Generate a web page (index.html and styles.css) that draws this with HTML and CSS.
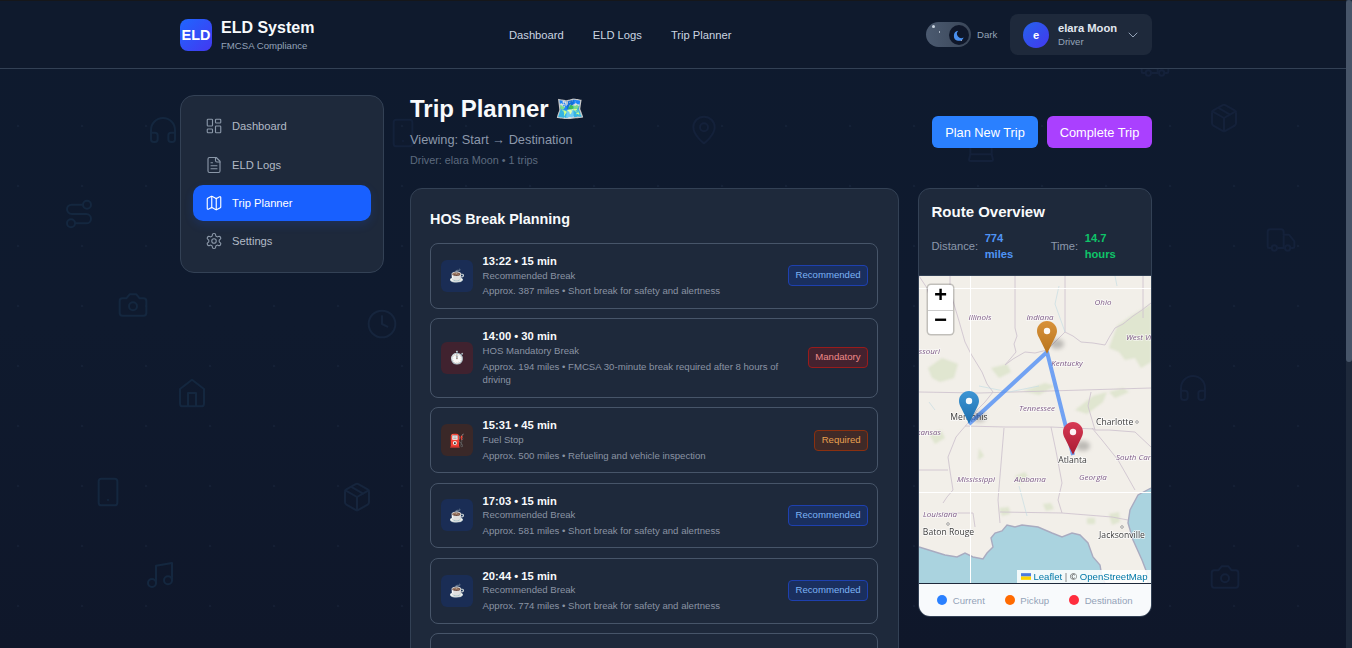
FILE: index.html
```html
<!DOCTYPE html>
<html lang="en">
<head>
<meta charset="utf-8">
<title>Trip Planner</title>
<link rel="stylesheet" href="styles.css">
</head>
<body>
<svg class="defs" width="0" height="0" aria-hidden="true">
  <defs>
    <symbol id="i-headphones" viewBox="0 0 24 24"><path d="M3 14h3a2 2 0 0 1 2 2v3a2 2 0 0 1-2 2H5a2 2 0 0 1-2-2v-7a9 9 0 0 1 18 0v7a2 2 0 0 1-2 2h-1a2 2 0 0 1-2-2v-3a2 2 0 0 1 2-2h3"/></symbol>
    <symbol id="i-route" viewBox="0 0 24 24"><circle cx="6" cy="19" r="3"/><path d="M9 19h8.5a3.5 3.5 0 0 0 0-7h-11a3.5 3.5 0 0 1 0-7H15"/><circle cx="18" cy="5" r="3"/></symbol>
    <symbol id="i-camera" viewBox="0 0 24 24"><path d="M14.5 4h-5L7 7H4a2 2 0 0 0-2 2v9a2 2 0 0 0 2 2h16a2 2 0 0 0 2-2V9a2 2 0 0 0-2-2h-3l-2.5-3z"/><circle cx="12" cy="13" r="3"/></symbol>
    <symbol id="i-clock" viewBox="0 0 24 24"><circle cx="12" cy="12" r="10"/><polyline points="12 6 12 12 16 14"/></symbol>
    <symbol id="i-home" viewBox="0 0 24 24"><path d="m3 9 9-7 9 7v11a2 2 0 0 1-2 2H5a2 2 0 0 1-2-2z"/><polyline points="9 22 9 12 15 12 15 22"/></symbol>
    <symbol id="i-phone" viewBox="0 0 24 24"><rect x="5" y="2" width="14" height="20" rx="2"/><path d="M12 18h.01"/></symbol>
    <symbol id="i-music" viewBox="0 0 24 24"><path d="M9 18V5l12-2v13"/><circle cx="6" cy="18" r="3"/><circle cx="18" cy="16" r="3"/></symbol>
    <symbol id="i-package" viewBox="0 0 24 24"><path d="M21 16V8a2 2 0 0 0-1-1.73l-7-4a2 2 0 0 0-2 0l-7 4A2 2 0 0 0 3 8v8a2 2 0 0 0 1 1.73l7 4a2 2 0 0 0 2 0l7-4A2 2 0 0 0 21 16z"/><path d="m3.3 7 8.7 5 8.7-5"/><path d="M12 22V12"/><path d="m7.5 4.27 9 5.15"/></symbol>
    <symbol id="i-pin" viewBox="0 0 24 24"><path d="M20 10c0 6-8 12-8 12s-8-6-8-12a8 8 0 0 1 16 0Z"/><circle cx="12" cy="10" r="3"/></symbol>
    <symbol id="i-truck" viewBox="0 0 24 24"><path d="M14 18V6a2 2 0 0 0-2-2H4a2 2 0 0 0-2 2v11a1 1 0 0 0 1 1h2"/><path d="M15 18H9"/><path d="M19 18h2a1 1 0 0 0 1-1v-3.65a1 1 0 0 0-.22-.624l-3.48-4.35A1 1 0 0 0 17.52 8H14"/><circle cx="17" cy="18" r="2"/><circle cx="7" cy="18" r="2"/></symbol>
    <symbol id="i-monitor" viewBox="0 0 24 24"><path d="M4 3v13M20 3v13"/><path d="M4 16h16l1 4a1 1 0 0 1-1 1H4a1 1 0 0 1-1-1z"/></symbol>
    <symbol id="i-dashboard" viewBox="0 0 24 24"><rect x="3" y="3" width="7" height="9" rx="1"/><rect x="14" y="3" width="7" height="5" rx="1"/><rect x="14" y="12" width="7" height="9" rx="1"/><rect x="3" y="16" width="7" height="5" rx="1"/></symbol>
    <symbol id="i-file" viewBox="0 0 24 24"><path d="M15 2H6a2 2 0 0 0-2 2v16a2 2 0 0 0 2 2h12a2 2 0 0 0 2-2V7Z"/><path d="M14 2v4a2 2 0 0 0 2 2h4"/><path d="M10 9H8"/><path d="M16 13H8"/><path d="M16 17H8"/></symbol>
    <symbol id="i-map" viewBox="0 0 24 24"><path d="M14.106 5.553a2 2 0 0 0 1.788 0l3.659-1.83A1 1 0 0 1 21 4.619v12.764a1 1 0 0 1-.553.894l-4.553 2.277a2 2 0 0 1-1.788 0l-4.212-2.106a2 2 0 0 0-1.788 0l-3.659 1.83A1 1 0 0 1 3 19.381V6.618a1 1 0 0 1 .553-.894l4.553-2.277a2 2 0 0 1 1.788 0z"/><path d="M15 5.764v15"/><path d="M9 3.236v15"/></symbol>
    <symbol id="i-settings" viewBox="0 0 24 24"><path d="M12.22 2h-.44a2 2 0 0 0-2 2v.18a2 2 0 0 1-1 1.73l-.43.25a2 2 0 0 1-2 0l-.15-.08a2 2 0 0 0-2.73.73l-.22.38a2 2 0 0 0 .73 2.73l.15.1a2 2 0 0 1 1 1.72v.51a2 2 0 0 1-1 1.74l-.15.09a2 2 0 0 0-.73 2.73l.22.38a2 2 0 0 0 2.73.73l.15-.08a2 2 0 0 1 2 0l.43.25a2 2 0 0 1 1 1.73V20a2 2 0 0 0 2 2h.44a2 2 0 0 0 2-2v-.18a2 2 0 0 1 1-1.73l.43-.25a2 2 0 0 1 2 0l.15.08a2 2 0 0 0 2.73-.73l.22-.39a2 2 0 0 0-.73-2.73l-.15-.08a2 2 0 0 1-1-1.74v-.5a2 2 0 0 1 1-1.74l.15-.09a2 2 0 0 0 .73-2.73l-.22-.38a2 2 0 0 0-2.73-.73l-.15.08a2 2 0 0 1-2 0l-.43-.25a2 2 0 0 1-1-1.73V4a2 2 0 0 0-2-2z"/><circle cx="12" cy="12" r="3"/></symbol>
    <symbol id="i-chevron" viewBox="0 0 24 24"><path d="m6 9 6 6 6-6"/></symbol>
    <linearGradient id="g-orange" x1="0" y1="0" x2="0" y2="1"><stop offset="0" stop-color="#d8923a"/><stop offset="1" stop-color="#b8741c"/></linearGradient>
    <linearGradient id="g-blue" x1="0" y1="0" x2="0" y2="1"><stop offset="0" stop-color="#3d95d4"/><stop offset="1" stop-color="#1d6fae"/></linearGradient>
    <linearGradient id="g-red" x1="0" y1="0" x2="0" y2="1"><stop offset="0" stop-color="#d83a55"/><stop offset="1" stop-color="#a81c32"/></linearGradient>
    <filter id="soft" x="-20%" y="-20%" width="140%" height="140%"><feGaussianBlur stdDeviation="1.1"/></filter>
    <filter id="shadow" x="-80%" y="-80%" width="260%" height="260%"><feGaussianBlur stdDeviation="2.2"/></filter>
  </defs>
</svg>

<div class="app">
<div class="bg-layer" aria-hidden="true">
  <svg class="bg-icon b1"><use href="#i-headphones"/></svg>
  <svg class="bg-icon b2"><use href="#i-route"/></svg>
  <svg class="bg-icon b3"><use href="#i-camera"/></svg>
  <svg class="bg-icon b4"><use href="#i-clock"/></svg>
  <svg class="bg-icon b5"><use href="#i-home"/></svg>
  <svg class="bg-icon b6"><use href="#i-phone"/></svg>
  <svg class="bg-icon b7"><use href="#i-music"/></svg>
  <svg class="bg-icon b8"><use href="#i-package"/></svg>
  <svg class="bg-icon b9"><use href="#i-pin"/></svg>
  <svg class="bg-icon b10"><use href="#i-monitor"/></svg>
  <svg class="bg-icon b11"><use href="#i-truck"/></svg>
  <svg class="bg-icon b12"><use href="#i-package"/></svg>
  <svg class="bg-icon b13"><use href="#i-truck"/></svg>
  <svg class="bg-icon b14"><use href="#i-headphones"/></svg>
  <svg class="bg-icon b15"><use href="#i-camera"/></svg>
  <svg class="bg-icon b16"><use href="#i-phone"/></svg>
</div>

<header class="topbar">
  <div class="wrap topbar-inner">
    <div class="brand">
      <div class="logo">ELD</div>
      <div class="brand-text">
        <div class="brand-name">ELD System</div>
        <div class="brand-sub">FMCSA Compliance</div>
      </div>
    </div>
    <nav class="topnav">
      <a>Dashboard</a>
      <a>ELD Logs</a>
      <a>Trip Planner</a>
    </nav>
    <div class="top-right">
      <div class="toggle">
        <span class="star s1"></span><span class="star s2"></span>
        <span class="knob">
          <svg viewBox="0 0 20 20" width="20" height="20"><path class="moon" d="M9.200 5.800A5 5 0 1 0 14.600 12.400 4.300 4.300 0 0 1 9.200 5.800z"/><circle class="moon-dot" cx="12.300" cy="15.600" r=".5"/></svg>
        </span>
      </div>
      <span class="toggle-label">Dark</span>
      <div class="user">
        <div class="avatar">e</div>
        <div class="user-text">
          <div class="user-name">elara Moon</div>
          <div class="user-role">Driver</div>
        </div>
        <svg class="chev"><use href="#i-chevron"/></svg>
      </div>
    </div>
  </div>
</header>

<div class="wrap layout">
  <aside class="sidebar">
    <a class="side-item"><svg class="side-icon"><use href="#i-dashboard"/></svg>Dashboard</a>
    <a class="side-item item-logs"><svg class="side-icon"><use href="#i-file"/></svg>ELD Logs</a>
    <a class="side-item active"><svg class="side-icon"><use href="#i-map"/></svg>Trip Planner</a>
    <a class="side-item"><svg class="side-icon"><use href="#i-settings"/></svg>Settings</a>
  </aside>

  <main class="main">
    <div class="page-head">
      <div class="head-text">
        <h1 class="page-title">Trip Planner 🗺️</h1>
        <p class="page-sub">Viewing: Start → Destination</p>
        <p class="page-driver">Driver: elara Moon • 1 trips</p>
      </div>
      <div class="actions">
        <button class="btn btn-blue">Plan New Trip</button>
        <button class="btn btn-purple">Complete Trip</button>
      </div>
    </div>

    <div class="columns">
      <section class="panel">
        <h2 class="panel-title">HOS Break Planning</h2>
        <div class="stops">
          <article class="stop">
            <div class="stop-icon tone-blue">☕</div>
            <div class="stop-body">
              <div class="stop-time">13:22 • 15 min</div>
              <div class="stop-type">Recommended Break</div>
              <div class="stop-desc">Approx. 387 miles • Short break for safety and alertness</div>
            </div>
            <span class="badge badge-blue">Recommended</span>
          </article>
          <article class="stop">
            <div class="stop-icon tone-red">⏱️</div>
            <div class="stop-body">
              <div class="stop-time">14:00 • 30 min</div>
              <div class="stop-type">HOS Mandatory Break</div>
              <div class="stop-desc">Approx. 194 miles • FMCSA 30-minute break required after 8 hours of driving</div>
            </div>
            <span class="badge badge-red">Mandatory</span>
          </article>
          <article class="stop">
            <div class="stop-icon tone-orange">⛽</div>
            <div class="stop-body">
              <div class="stop-time">15:31 • 45 min</div>
              <div class="stop-type">Fuel Stop</div>
              <div class="stop-desc">Approx. 500 miles • Refueling and vehicle inspection</div>
            </div>
            <span class="badge badge-orange">Required</span>
          </article>
          <article class="stop">
            <div class="stop-icon tone-blue">☕</div>
            <div class="stop-body">
              <div class="stop-time">17:03 • 15 min</div>
              <div class="stop-type">Recommended Break</div>
              <div class="stop-desc">Approx. 581 miles • Short break for safety and alertness</div>
            </div>
            <span class="badge badge-blue">Recommended</span>
          </article>
          <article class="stop">
            <div class="stop-icon tone-blue">☕</div>
            <div class="stop-body">
              <div class="stop-time">20:44 • 15 min</div>
              <div class="stop-type">Recommended Break</div>
              <div class="stop-desc">Approx. 774 miles • Short break for safety and alertness</div>
            </div>
            <span class="badge badge-blue">Recommended</span>
          </article>
          <article class="stop stop-empty"></article>
        </div>
      </section>

      <section class="route">
        <div class="route-head">
          <h2 class="route-title">Route Overview</h2>
          <div class="route-stats">
            <div class="stat"><span class="stat-label">Distance:</span><span class="stat-value val-blue">774 miles</span></div>
            <div class="stat"><span class="stat-label">Time:</span><span class="stat-value val-green">14.7 hours</span></div>
          </div>
        </div>
        <div class="map">
          <svg class="map-svg" viewBox="0 0 232 307" width="232" height="307">
            <rect class="land" width="232" height="307"/>
            <g class="greens" filter="url(#soft)">
              <path d="M190 72l8-22 14-10 20-12v58l-10 6-6-10-10 2-6-8z"/>
              <path d="M9 92l14-10 16 6-4 14-14 4-8-4z"/>
              <path d="M72 92l16-4 4 8-12 6z"/>
              <path d="M156 134l18-14 14-4-4 10-16 12z"/>
              <path d="M96 200l10-4 4 6-10 6z"/>
              <path d="M104 115l22-8 10 3-16 9z"/>
              <path d="M190 116l14-4 6 4-14 6z"/>
              <path d="M124 228l8-1 3 6-8 2z"/>
              <path d="M190 238l10-2 1 10-8 3z"/>
              <path d="M80 232l10-1 1 7-8 2z"/>
              <path d="M10 158l12-4 4 8-10 6z"/>
              <path d="M60 172l5 8-6 4z"/>
              <path d="M168 242l8 0 0 6-8 0z"/>
            </g>
            <g class="borders">
              <path d="M96 0v52l2 8-3 8 2 8-5 6-6 7"/>
              <path d="M146 0v56"/>
              <path d="M146 56l8 4 8 6 12 1 12 2 5-9 5-8 8-4 10-8 9-6 9-7"/>
              <path d="M224 0v42"/>
              <path d="M86 89l8-6 12-7 10 1 12-3 8-8 10-10"/>
              <path d="M31 0v9l3 16 6 20 6 21 6 12 11 18 5 12 6 8"/>
              <path d="M0 116l60 1 70-2 102-3"/>
              <path d="M46 150l40 1 46 0 44 2"/>
              <path d="M74 116l-8 10-8 8-8 13"/>
              <path d="M49 147l-7 8-5 6-8 20 2 14 3 19-6 7-4 6"/>
              <path d="M0 194h29"/>
              <path d="M23 237h31l2 14"/>
              <path d="M85 152l-6 72 2 23"/>
              <path d="M132 151l5 24 6 32-4 17 4 13"/>
              <path d="M81 236l62 1 50 4 16 3"/>
              <path d="M173 152l10 12 16 20 8 14 9 16"/>
              <path d="M176 154l14 0 26 2 16 15"/>
              <path d="M172 116l-3 14 7 24"/>
              <path d="M0 0l8 12 8 30"/>
            </g>
            <g class="rivers">
              <path d="M58 118l-4 16"/>
              <path d="M140 10l-4 18 10 28"/>
              <path d="M100 210l8 30"/>
              <path d="M60 110l30 6 30-6"/>
              <path d="M10 126l6 8"/>
              <path d="M196 0l2 10"/>
            </g>
            <path class="sea" d="M0 271l13 4 13 4 12 2 8-4 8 4 10 2 4-6 6-6-2-9 4-5 7-2 5-6 8 2 7-2 16 2 14 6 10 4 10-4 8 2 8 8 5 14 7 8 2 12 3 6H0z"/>
            <path class="sea" d="M232 212l-13 7-8 15-2 13 5 17 9 20 5 13 1 10h3z"/>
            <path class="coast" d="M0 271l13 4 13 4 12 2 8-4 8 4 10 2 4-6 6-6-2-9 4-5 7-2 5-6 8 2 7-2 16 2 14 6 10 4 10-4 8 2 8 8 5 14 7 8 2 12 3 6"/>
            <path class="coast" d="M232 212l-13 7-8 15-2 13 5 17 9 20 5 13 1 10"/>
            <path class="seam" d="M51.500 0v307M0 12.500h232M0 216.500h232"/>

            <g class="state">
              <text x="61" y="44" text-anchor="middle">Illinois</text>
              <text x="121" y="44" text-anchor="middle">Indiana</text>
              <text x="184" y="29" text-anchor="middle">Ohio</text>
              <text x="207" y="64">West Vi</text>
              <text x="21" y="78" text-anchor="end">Missouri</text>
              <text x="148" y="90" text-anchor="middle">Kentucky</text>
              <text x="118" y="135" text-anchor="middle">Tennessee</text>
              <text x="197" y="184">South Car</text>
              <text x="22" y="159" text-anchor="end">Arkansas</text>
              <text x="57" y="206" text-anchor="middle">Mississippi</text>
              <text x="111" y="206" text-anchor="middle">Alabama</text>
              <text x="174" y="204" text-anchor="middle">Georgia</text>
              <text x="21" y="241" text-anchor="middle">Louisiana</text>
            </g>
            <g class="city">
              <text x="50" y="144" text-anchor="middle">Memphis</text>
              <text x="177" y="149">Charlotte</text>
              <text x="153.500" y="187" text-anchor="middle">Atlanta</text>
              <text x="29.500" y="259" text-anchor="middle">Baton Rouge</text>
              <text x="203" y="262" text-anchor="middle">Jacksonville</text>
            </g>
            <g class="city-dot">
              <circle cx="218" cy="146" r="1.300"/>
              <circle cx="29" cy="248" r="1.300"/>
              <circle cx="203" cy="251" r="1.300"/>
            </g>
            <polyline class="route-line" points="50,148 128,76 154,179"/>
            <ellipse class="pin-shadow" cx="138" cy="68" rx="7" ry="5" filter="url(#shadow)"/>
            <ellipse class="pin-shadow" cx="164" cy="170" rx="7" ry="5" filter="url(#shadow)"/>
            <ellipse class="pin-shadow" cx="60" cy="141" rx="7" ry="5" filter="url(#shadow)"/>
            <g transform="translate(40 115) scale(.8)">
              <path fill="url(#g-blue)" d="M12.500 0C5.600 0 0 5.600 0 12.500c0 3 1 5.500 2.500 8L12.500 41l10-20.500c1.500-2.500 2.500-5.500 2.500-8C25 5.600 19.400 0 12.500 0z"/>
              <circle class="pin-hole" cx="12.500" cy="12.500" r="4"/>
            </g>
            <g transform="translate(118 45) scale(.8)">
              <path fill="url(#g-orange)" d="M12.500 0C5.600 0 0 5.600 0 12.500c0 3 1 5.500 2.500 8L12.500 41l10-20.500c1.500-2.500 2.500-5.500 2.500-8C25 5.600 19.400 0 12.500 0z"/>
              <circle class="pin-hole" cx="12.500" cy="12.500" r="4"/>
            </g>
            <g transform="translate(144 146) scale(.8)">
              <path fill="url(#g-red)" d="M12.500 0C5.600 0 0 5.600 0 12.500c0 3 1 5.500 2.500 8L12.500 41l10-20.500c1.500-2.500 2.500-5.500 2.500-8C25 5.600 19.400 0 12.500 0z"/>
              <circle class="pin-hole" cx="12.500" cy="12.500" r="4"/>
            </g>
          </svg>
          <div class="zoom-ctl">
            <a class="zoom-btn">+</a>
            <a class="zoom-btn">−</a>
          </div>
          <div class="attrib">
            <svg class="flag" viewBox="0 0 12 8" width="10" height="7"><rect width="12" height="4" fill="#4C7BE1"/><rect y="4" width="12" height="4" fill="#FFD500"/></svg>
            <a>Leaflet</a> <span class="sep">|</span> © <a>OpenStreetMap</a>
          </div>
        </div>
        <div class="legend">
          <span class="legend-item"><i class="dot dot-blue"></i>Current</span>
          <span class="legend-item"><i class="dot dot-orange"></i>Pickup</span>
          <span class="legend-item"><i class="dot dot-red"></i>Destination</span>
        </div>
      </section>
    </div>
  </main>
</div>
</div>
<div class="scroll-track" aria-hidden="true"><div class="scroll-thumb"></div></div>
</body>
</html>
```
FILE: styles.css
```css
* { box-sizing: border-box; }
html, body { margin: 0; height: 100%; overflow: hidden; background: #0f172a; }
body {
  font-family: "Liberation Sans", Arial, sans-serif;
  color: #f8fafc;
}
.app {
  position: relative;
  height: 100vh;
  overflow: hidden;
  background-color: #0f1a2d;
  background-image:
    radial-gradient(circle at 18px 6px, rgba(100,130,170,.07) 1px, transparent 1.6px),
    linear-gradient(180deg, #0e1a2e 0%, #0f1a2e 50%, #0f172a 100%);
  background-size: 64px 60px, 100% 648px;
}
.scroll-track { position: fixed; right: 0; top: 0; bottom: 0; width: 6px; background: #1e293b; }
.scroll-thumb { height: 362px; background: #475569; border-radius: 3px; }
h1, h2, p { margin: 0; }
a { color: inherit; }
.defs { position: absolute; }
.bg-layer { position: absolute; left: 0; top: 0; width: 100%; height: 1160px; overflow: hidden; pointer-events: none; }
.bg-icon { position: absolute; width: 32px; height: 32px; fill: none; stroke: #14273f; stroke-width: 1.5; stroke-linecap: round; stroke-linejoin: round; }
.b1 { left: 147px; top: 114px; }
.b2 { left: 63px; top: 198px; }
.b3 { left: 117px; top: 289px; }
.b4 { left: 366px; top: 308px; stroke: #16253d; }
.b5 { left: 176px; top: 377px; }
.b6 { left: 92px; top: 476px; }
.b7 { left: 144px; top: 559px; }
.b8 { left: 341px; top: 481px; stroke: #16253d; }
.b9 { left: 688px; top: 114px; stroke: #14213a; }
.b10 { left: 965px; top: 133px; stroke: #14213a; }
.b11 { left: 1139px; top: 49px; stroke: #14213a; }
.b12 { left: 1208px; top: 102px; stroke: #14213a; }
.b13 { left: 1265px; top: 224px; stroke: #14213a; }
.b14 { left: 1177px; top: 372px; stroke: #14213a; }
.b15 { left: 1209px; top: 561px; stroke: #14213a; }
.b16 { left: 387px; top: 117px; stroke: #13213a; }

.wrap { width: 972px; margin-left: 180px; }
.topbar {
  position: relative;
  height: 69px;
  background: #0f1a2d;
  border-top: 1px solid #16171a;
  border-bottom: 1px solid #334155;
}
.topbar-inner { height: 67px; display: flex; align-items: center; }
.brand { display: flex; align-items: center; gap: 9px; width: 329px; }
.logo {
  width: 32px; height: 32px; border-radius: 8px;
  background: linear-gradient(135deg, #1f66ff, #4338f0);
  display: flex; align-items: center; justify-content: center;
  font-size: 14.4px; font-weight: 700; color: #fff;
}
.brand-text { padding-top: 1px; }
.brand-name { font-size: 16px; font-weight: 700; line-height: 18px; margin-bottom: 3px; }
.brand-sub { font-size: 9.6px; line-height: 12px; color: #94a3b8; }
.topnav { display: flex; gap: 29px; font-size: 11.2px; color: #cbd5e1; }
.top-right { margin-left: auto; display: flex; align-items: center; }
.toggle {
  position: relative; width: 45px; height: 25px; border-radius: 13px;
  background: linear-gradient(90deg, #4b5a70, #3a4658);
}
.star { position: absolute; background: #cbd5e1; border-radius: 50%; }
.s1 { left: 6px; top: 3px; width: 3px; height: 3px; }
.s2 { left: 13px; top: 9px; width: 1px; height: 2px; }
.knob { position: absolute; right: 2px; top: 3px; width: 20px; height: 20px; border-radius: 50%; background: #0f172a; display: block; }
.knob svg { display: block; }
.moon { fill: #4a90f0; }
.moon-dot { fill: #cbd5e1; }
.toggle-label { margin-left: 6px; font-size: 9.6px; color: #94a3b8; width: 33px; }
.user {
  width: 142px; height: 41px; border-radius: 8px; background: #1e293b;
  display: flex; align-items: center; padding: 0 13px;
}
.avatar {
  width: 26px; height: 26px; border-radius: 50%;
  background: linear-gradient(135deg, #2563eb, #4338f0);
  display: flex; align-items: center; justify-content: center;
  font-size: 11.2px; font-weight: 700; color: #fff;
}
.user-text { margin-left: 9px; flex: 1; }
.user-name { font-size: 11.2px; font-weight: 700; line-height: 14px; color: #e2e8f0; }
.user-role { font-size: 9.6px; line-height: 14px; color: #94a3b8; }
.chev { width: 16px; height: 16px; fill: none; stroke: #94a3b8; stroke-width: 1.5; stroke-linecap: round; stroke-linejoin: round; margin-right: -2px; }

.layout { position: relative; display: flex; align-items: flex-start; gap: 26px; padding-top: 26px; min-height: 1091px; }
.sidebar {
  width: 204px; height: 178px; padding: 12px; flex: none;
  background: #1e293b; border: 1px solid #334155; border-radius: 14px;
}
.side-item {
  height: 36px; margin-bottom: 2.4px; padding-left: 12px;
  display: flex; align-items: center; gap: 9px;
  font-size: 11.2px; color: #b2bac6; border-radius: 10px;
}
.item-logs { padding-top: 1px; }
.side-icon { width: 18px; height: 18px; fill: none; stroke: #8a97a8; stroke-width: 1.5; stroke-linecap: round; stroke-linejoin: round; }
.side-item.active { background: #1860ff; color: #fff; box-shadow: 0 4px 10px rgba(24,96,255,.15); }
.side-item.active .side-icon { stroke: #fff; }

.main { flex: 1; min-width: 0; }
.page-head { display: flex; justify-content: space-between; align-items: center; height: 74px; margin-bottom: 19px; }
.head-text { align-self: flex-start; }
.page-title { font-size: 24px; line-height: 28px; font-weight: 700; margin-bottom: 9px; }
.page-sub { font-size: 12.8px; line-height: 16px; color: #8c98ab; margin-bottom: 5px; }
.page-driver { font-size: 10.8px; line-height: 14px; color: #5d6a7e; }
.actions { display: flex; gap: 9px; }
.btn { height: 32px; padding: 0; border: 0; border-radius: 6px; color: #fff; font: 12.8px "Liberation Sans", Arial, sans-serif; }
.btn-blue { width: 106px; background: #2a80ff; }
.btn-purple { width: 105px; background: #aa40ff; }

.columns { display: grid; grid-template-columns: 489px 234px; gap: 19px; align-items: start; }
.panel { background: #1e293b; border: 1px solid #334155; border-radius: 12px; padding: 20px 20px 20px 19px; }
.panel-title { font-size: 14.4px; line-height: 20px; font-weight: 700; margin-bottom: 14px; }
.stops { display: flex; flex-direction: column; gap: 9.6px; }
.stop {
  display: flex; align-items: center; gap: 9.6px; padding: 10px 9px 10px 10px;
  border: 1px solid #475569; border-radius: 8px;
}
.stop-empty { height: 66px; }
.stop-icon {
  width: 32px; height: 32px; flex: none; border-radius: 6px;
  display: flex; align-items: center; justify-content: center; font-size: 12.8px;
  font-family: "Noto Color Emoji", "Liberation Sans", sans-serif;
}
.tone-blue { background: #1a2d55; }
.tone-red { background: #40222f; }
.tone-orange { background: #3a2828; }
.stop-body { flex: 1; min-width: 0; }
.stop-time { font-size: 11.2px; line-height: 15.5px; font-weight: 700; color: #f8fafc; }
.stop-type { font-size: 9.6px; line-height: 12.5px; color: #8a93a3; margin-bottom: 2.4px; }
.stop-desc { font-size: 9.6px; line-height: 13.4px; color: #8a93a3; }
.badge { flex: none; height: 21px; padding: 0 6.4px; border: 1px solid; border-radius: 4px; font-size: 9.6px; line-height: 18px; margin-left: 8px; }
.badge-blue { background: #1a2f5e; border-color: #1e40af; color: #7db3f5; }
.badge-red { background: #44222f; border-color: #991b1b; color: #f08a8a; }
.badge-orange { background: #3f2a28; border-color: #8a3010; color: #e8a050; }

.route { border: 1px solid #334155; border-radius: 12px; overflow: hidden; background: #1e293b; }
.route-head { height: 87px; padding: 14px 13px 0 12.5px; border-bottom: 1px solid #334155; }
.route-title { font-size: 15px; line-height: 18px; font-weight: 700; margin-bottom: 9px; }
.route-stats { display: flex; gap: 32px; }
.stat { display: flex; align-items: center; gap: 6.5px; }
.stat-label { font-size: 11.2px; color: #8c98ab; }
.stat-value { font-size: 11.2px; line-height: 16px; font-weight: 700; width: 34px; }
.val-blue { color: #4f94f5; }
.val-green { color: #0ec469; }
.map { position: relative; height: 308px; overflow: hidden; border-bottom: 1px solid #1e293b; }
.map-svg { display: block; }
.land { fill: #f2efe9; }
.greens path { fill: #d3e0bf; opacity: .6; }
.borders path { fill: none; stroke: #cfc4cf; stroke-width: .9; }
.rivers path { fill: none; stroke: #c0dae2; stroke-width: .6; }
.sea { fill: #aad3df; }
.coast { fill: none; stroke: #a9abc0; stroke-width: 1.4; }
.seam { stroke: #fff; stroke-width: 1; fill: none; }
.state text { font: italic 8px "Open Sans", "Liberation Sans", sans-serif; fill: #7d5a87; paint-order: stroke; stroke: rgba(255,255,255,.6); stroke-width: 1.5px; }
.city text { font: 8.6px "Open Sans", "Liberation Sans", sans-serif; fill: #3a3a3a; paint-order: stroke; stroke: rgba(255,255,255,.8); stroke-width: 1.5px; }
.city-dot circle { fill: #fff; stroke: #666; stroke-width: .6; }
.route-line { fill: none; stroke: #3b82f6; stroke-width: 4; stroke-opacity: .7; stroke-linejoin: round; }
.pin-shadow { fill: rgba(0,0,0,.22); }
.pin-hole { fill: #fff; opacity: .95; }
.zoom-ctl {
  position: absolute; left: 9px; top: 9px; width: 25px;
  border-radius: 3px; box-shadow: 0 0 0 1.5px rgba(0,0,0,.2); background: #fff; overflow: hidden;
}
.zoom-btn {
  display: flex; align-items: center; justify-content: center; height: 24.5px;
  font: 700 22px/24px "Liberation Mono", monospace; color: #000;
}
.zoom-btn + .zoom-btn { border-top: 1px solid #ccc; }
.attrib {
  position: absolute; right: 0; bottom: 0; padding: 0 3.5px; height: 13.5px;
  background: rgba(255,255,255,.85); font-size: 9.6px; line-height: 13.5px; color: #333; white-space: nowrap;
}
.attrib a { color: #0078a8; }
.flag { vertical-align: -0.5px; }
.sep { color: #777; }
.legend {
  height: 32px; background: #f8fafc; display: flex; align-items: center; justify-content: center; gap: 20px;
  font-size: 9.6px; color: #94a3b8;
}
.legend-item { display: flex; align-items: center; gap: 5.5px; }
.dot { width: 10px; height: 10px; border-radius: 50%; display: block; }
.dot-blue { background: #2a80ff; }
.dot-orange { background: #ff6a00; }
.dot-red { background: #ff2d3d; }
```
